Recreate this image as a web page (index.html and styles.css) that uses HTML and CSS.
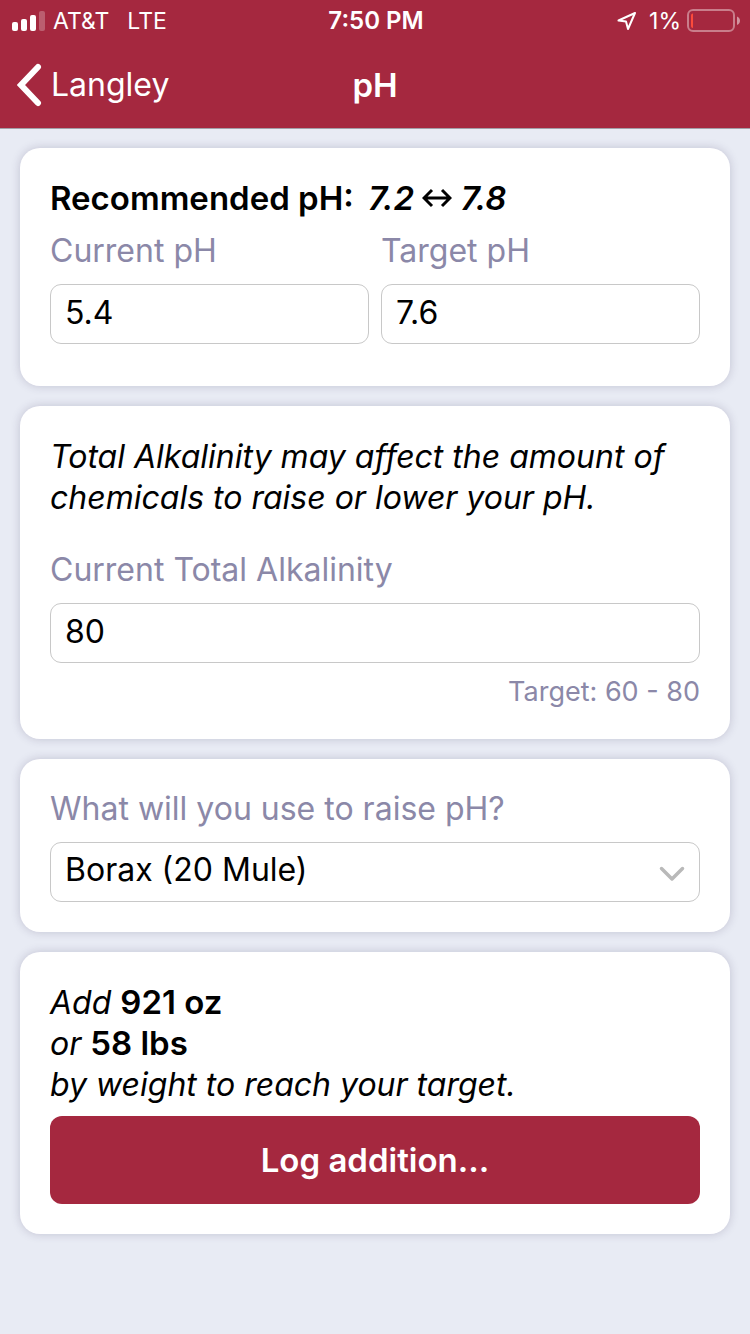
FILE: index.html
```html
<!DOCTYPE html>
<html lang="en">
<head>
<meta charset="utf-8">
<meta name="viewport" content="width=device-width, initial-scale=1">
<title>pH</title>
<link rel="stylesheet" href="styles.css">
</head>
<body>
<header class="top">
  <div class="status">
    <div class="status-side">
      <svg class="signal" width="33" height="20" viewBox="0 0 33 20" fill="#fff" aria-hidden="true">
        <rect x="0" y="11" width="6" height="9" rx="2"/>
        <rect x="9" y="8" width="6" height="12" rx="2"/>
        <rect x="18" y="4" width="6" height="16" rx="2"/>
        <rect x="27" y="0" width="6" height="20" rx="2" opacity=".25"/>
      </svg>
      <span class="carrier">AT&amp;T</span>
      <span class="network">LTE</span>
    </div>
    <span class="clock">7:50 PM</span>
    <div class="status-side status-end">
      <svg class="location" width="20" height="20" viewBox="0 0 20 20" fill="none" stroke="#fff" stroke-width="2" stroke-linejoin="round" aria-hidden="true">
        <path d="M18 2 1.500 9.500 9 10.500 11 18Z"/>
      </svg>
      <span class="charge">1%</span>
      <svg class="battery" width="53" height="24" viewBox="0 0 53 24" aria-hidden="true">
        <rect x="1" y="1" width="46" height="21" rx="5" fill="none" stroke="#fff" stroke-opacity=".4" stroke-width="2"/>
        <path d="M50 7.500c4 1.500 4 7 0 8.500Z" fill="#fff" fill-opacity=".5"/>
        <path d="M6 4.500v14.500c-1.200 0-2-.8-2-2v-10.500c0-1.200.8-2 2-2Z" fill="#fc4b3b"/>
      </svg>
    </div>
  </div>
  <nav class="nav">
    <a class="back" href="#">
      <svg width="26" height="44" viewBox="0 0 26 44" fill="none" stroke="#fff" stroke-width="6" stroke-linecap="round" stroke-linejoin="miter" aria-hidden="true"><path d="M21 4 4 22 21 40"/></svg>
      <span>Langley</span>
    </a>
    <h1 class="title">pH</h1>
  </nav>
</header>
<main class="cards">
  <section class="card card-range">
    <h2 class="heading">Recommended pH: <em class="range">7.2 <svg class="arrows" width="30" height="22" viewBox="0 0 30 22" fill="none" stroke="#000" stroke-width="3" stroke-linejoin="miter" role="img" aria-label="to"><path d="M2 11H28M10 3 2 11 10 19M20 3 28 11 20 19"/></svg> 7.8</em></h2>
    <div class="pair">
      <div class="field">
        <label class="label" for="current">Current pH</label>
        <input class="box" id="current" type="text" inputmode="decimal" value="5.4">
      </div>
      <div class="field">
        <label class="label" for="target">Target pH</label>
        <input class="box" id="target" type="text" inputmode="decimal" value="7.6">
      </div>
    </div>
  </section>
  <section class="card">
    <p class="note">Total Alkalinity may affect the amount of chemicals to raise or lower your pH.</p>
    <div class="field">
      <label class="label" for="alkalinity">Current Total Alkalinity</label>
      <input class="box" id="alkalinity" type="text" inputmode="numeric" value="80">
    </div>
    <p class="hint">Target: 60 - 80</p>
  </section>
  <section class="card">
    <div class="field">
      <label class="label" for="chemical">What will you use to raise pH?</label>
      <div class="picker">
        <select class="box select" id="chemical"><option>Borax (20 Mule)</option></select>
        <svg class="chevron" width="26" height="16" viewBox="0 0 26 16" fill="none" stroke="#b9b9b9" stroke-width="3.500" stroke-linecap="round" stroke-linejoin="round" aria-hidden="true"><path d="M2.500 2.500 13 13 23.500 2.500"/></svg>
      </div>
    </div>
  </section>
  <section class="card">
    <p class="result">Add <strong>921 oz</strong><br>or <strong>58 lbs</strong><br>by weight to reach your target.</p>
    <button class="log" type="button">Log addition...</button>
  </section>
</main>
</body>
</html>
```
FILE: styles.css
```css
* {
  box-sizing: border-box;
}

body {
  margin: 0;
  min-height: 100vh;
  background: #e8ebf4;
  color: #000;
  font-family: Inter, "Liberation Sans", sans-serif;
  font-size: 32px;
  line-height: 40px;
}

h1, h2, p {
  margin: 0;
  font-size: inherit;
}

.top {
  background: #a5283f;
  color: #fff;
  border-bottom: 1px solid #a39fa8;
}

.status {
  display: grid;
  grid-template-columns: 1fr auto 1fr;
  align-items: center;
  height: 42px;
  padding: 0 10px 0 12px;
  font-size: 23px;
}

.status-side {
  display: flex;
  align-items: center;
}

.status-end {
  justify-content: flex-end;
}

.carrier {
  margin-left: 8px;
}

.network {
  margin-left: 18px;
}

.clock {
  font-size: 24px;
  font-weight: 600;
}

.location {
  margin-right: 12px;
}

.battery {
  margin-left: 6px;
}

.nav {
  display: grid;
  grid-template-columns: 1fr auto 1fr;
  align-items: center;
  height: 86px;
  padding: 0 17px;
}

.back {
  display: flex;
  align-items: center;
  gap: 8px;
  color: inherit;
  text-decoration: none;
}

.title,
.heading,
.result strong,
.log {
  font-size: 33px;
  font-weight: 600;
}

.cards {
  display: flex;
  flex-direction: column;
  gap: 20px;
  padding: 19px 20px 40px;
}

.card {
  padding: 30px;
  border-radius: 20px;
  background: #fff;
  box-shadow: 0 0 10px rgba(60, 50, 90, 0.22);
}

.card-range {
  padding-bottom: 42px;
}

.heading {
  margin-bottom: 13px;
}

.range {
  margin-left: 6px;
}

.arrows {
  vertical-align: 1px;
}

.pair {
  display: grid;
  grid-template-columns: 1fr 1fr;
  gap: 12px;
}

.field {
  display: flex;
  flex-direction: column;
  gap: 13px;
}

.label,
.hint {
  color: #8b88a8;
}

.box {
  width: 100%;
  height: 60px;
  padding: 0 14px 4px;
  border: 1px solid #c8c8c8;
  border-radius: 11px;
  background: #fff;
  color: #000;
  font: inherit;
}

.note {
  margin-bottom: 32px;
  line-height: 41px;
  font-style: italic;
}

.hint {
  margin-top: 12px;
  font-size: 27px;
  line-height: 34px;
  text-align: right;
}

.picker {
  display: grid;
  align-items: center;
}

.select {
  grid-area: 1 / 1;
  appearance: none;
}

.chevron {
  grid-area: 1 / 1;
  justify-self: end;
  margin-top: 4px;
  margin-right: 15px;
  pointer-events: none;
}

.result {
  margin-bottom: 11px;
  line-height: 41px;
  font-style: italic;
}

.result strong {
  font-style: normal;
}

.log {
  display: block;
  width: 100%;
  height: 88px;
  border: 0;
  border-radius: 12px;
  background: #a5283f;
  color: #fff;
  font-family: inherit;
}
```
